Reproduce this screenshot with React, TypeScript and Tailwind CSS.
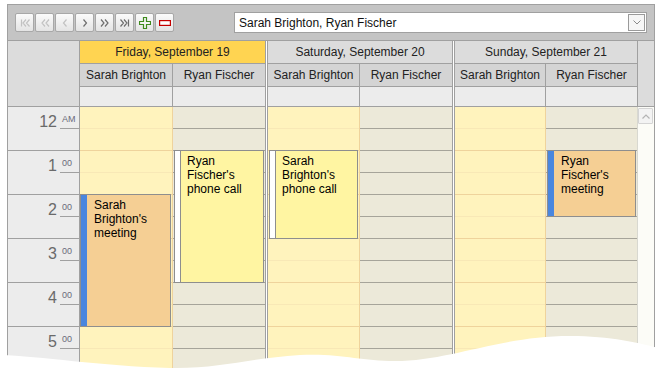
import React from "react";

const BORDER = "border-[#a0a0a0]";

function NavIcon({ kind, disabled }: { kind: string; disabled?: boolean }) {
  const c = disabled ? "#c2c2c2" : "#6e6e6e";
  const p: Record<string, string> = {
    first: "M1.5 1.5 V8.5 M6 1.5 L3 5 L6 8.5 M9.5 1.5 L6.5 5 L9.5 8.5",
    prev2: "M5 1.5 L2 5 L5 8.5 M9 1.5 L6 5 L9 8.5",
    prev: "M6.5 1.5 L3.5 5 L6.5 8.5",
    next: "M3.5 1.5 L6.5 5 L3.5 8.5",
    next2: "M1 1.5 L4 5 L1 8.5 M5 1.5 L8 5 L5 8.5",
    last: "M0.5 1.5 L3.5 5 L0.5 8.5 M4 1.5 L7 5 L4 8.5 M8.5 1.5 V8.5",
  };
  return (
    <svg width="10" height="10" viewBox="0 0 10 10">
      <path d={p[kind]} fill="none" stroke={c} strokeWidth="1.2" />
    </svg>
  );
}

function Btn({ children }: { children: React.ReactNode }) {
  return (
    <div className="w-[19px] h-[19px] rounded-[2px] border border-[#a8a8a8] bg-gradient-to-b from-[#fbfbfb] to-[#e4e4e4] flex items-center justify-center">
      {children}
    </div>
  );
}

function HourLabel({ n, s }: { n: string; s: string }) {
  return (
    <div className="h-[44px] border-b border-[#a0a0a0] flex flex-col">
      <div className="h-[21px] flex justify-end">
        <span className="text-[16px] leading-[17px] pt-[6px] pr-[3px] text-[#6a6a6a]">{n}</span>
        <span className="w-[19px] text-[9px] leading-[9px] pt-[8px] pl-[2px] text-[#6a6a7a]">{s}</span>
      </div>
      <div className="flex justify-end">
        <div className="w-[19px] h-px bg-[#a0a0a0]" />
      </div>
    </div>
  );
}

const HOURS = [
  { n: "12", s: "AM" },
  { n: "1", s: "00" },
  { n: "2", s: "00" },
  { n: "3", s: "00" },
  { n: "4", s: "00" },
  { n: "5", s: "00" },
];

const HALF = Array.from({ length: 14 }, (_, i) => i);

function YellowCells() {
  return (
    <>
      {HALF.map((i) =>
        i % 2 === 0 ? (
          <div key={i} className="h-[22px] border-b border-[#f8e8b6]" />
        ) : (
          <div key={i} className="h-[22px] border-b border-[#efd39c]" />
        )
      )}
    </>
  );
}

function BeigeCells() {
  return (
    <>
      {HALF.map((i) => (
        <div key={i} className="h-[22px] border-b border-[#a6a49a]" />
      ))}
    </>
  );
}

function Meeting({ lines, cls }: { lines: string[]; cls: string }) {
  return (
    <div className={"absolute border border-[#8e8e8e] bg-[#f5cf94] flex " + cls}>
      <div className="w-[6px] bg-[#4a86de]" />
      <div className="pl-[7px] pt-[3px] text-[12px] leading-[14px] text-black">
        {lines.map((l) => (
          <div key={l}>{l}</div>
        ))}
      </div>
    </div>
  );
}

function Call({ lines, cls }: { lines: string[]; cls: string }) {
  return (
    <div className={"absolute border border-[#8e8e8e] bg-[#fff5a2] flex " + cls}>
      <div className="w-[6px] bg-white border-r border-[#8e8e8e]" />
      <div className="pl-[6px] pt-[3px] text-[12px] leading-[14px] text-black">
        {lines.map((l) => (
          <div key={l}>{l}</div>
        ))}
      </div>
    </div>
  );
}

export default function App() {
  return (
    <div className="relative w-[662px] h-[374px] overflow-hidden bg-white font-['Liberation_Sans',Arial,sans-serif] text-[12px] text-[#222]">
      <div className={"ml-[7px] mt-[4px] w-[648px] border " + BORDER}>
        {/* toolbar */}
        <div className={"h-[36px] bg-[#c4c4c4] border-b flex items-center pl-[7px] " + BORDER}>
          <div className="flex gap-[1px]">
            <Btn><NavIcon kind="first" disabled /></Btn>
            <Btn><NavIcon kind="prev2" disabled /></Btn>
            <Btn><NavIcon kind="prev" disabled /></Btn>
            <Btn><NavIcon kind="next" /></Btn>
            <Btn><NavIcon kind="next2" /></Btn>
            <Btn><NavIcon kind="last" /></Btn>
            <Btn>
              <svg width="12" height="12" viewBox="0 0 12 12">
                <path d="M4.5 0.5 H7.5 V4.5 H11.5 V7.5 H7.5 V11.5 H4.5 V7.5 H0.5 V4.5 H4.5 Z" fill="#f4f4f4" stroke="#3f8a1e" strokeWidth="1.2" />
              </svg>
            </Btn>
            <Btn>
              <svg width="12" height="6" viewBox="0 0 12 6">
                <rect x="0.6" y="0.6" width="10.8" height="4.8" fill="#ffffff" stroke="#c40000" strokeWidth="1.2" />
              </svg>
            </Btn>
          </div>
          <div className={"ml-[60px] w-[413px] h-[21px] bg-white border flex items-center justify-between pl-[4px] pr-[1px] " + BORDER}>
            <span className="text-[12px] text-[#111]">Sarah Brighton, Ryan Fischer</span>
            <div className="w-[17px] h-[17px] border border-[#9a9a9a] bg-[#f6f6f6] flex items-center justify-center">
              <svg width="8" height="5" viewBox="0 0 8 5">
                <path d="M0.5 0.5 L4 4 L7.5 0.5" fill="none" stroke="#8a8a8a" strokeWidth="1" />
              </svg>
            </div>
          </div>
        </div>

        {/* header */}
        <div className="flex">
          <div className={"w-[72px] h-[66px] bg-[#dcdcdc] border-r border-b " + BORDER} />
          {/* Friday */}
          <div className="w-[185px] flex flex-col">
            <div className={"h-[23px] bg-[#ffd451] border-b flex items-center justify-center " + BORDER}>Friday, September 19</div>
            <div className={"h-[23px] bg-[#d4d4d4] border-b flex " + BORDER}>
              <div className={"w-[93px] border-r flex items-center justify-center " + BORDER}>Sarah Brighton</div>
              <div className="flex-1 flex items-center justify-center">Ryan Fischer</div>
            </div>
            <div className={"h-[20px] bg-[#ececec] border-b flex " + BORDER}>
              <div className={"w-[93px] border-r " + BORDER} />
            </div>
          </div>
          {/* Saturday */}
          <div className="w-[187px] flex flex-col border-l-[3px] border-double border-l-[#a0a0a0]">
            <div className={"h-[23px] bg-[#dcdcdc] border-b flex items-center justify-center " + BORDER}>Saturday, September 20</div>
            <div className={"h-[23px] bg-[#d4d4d4] border-b flex " + BORDER}>
              <div className={"w-[92px] border-r flex items-center justify-center " + BORDER}>Sarah Brighton</div>
              <div className="flex-1 flex items-center justify-center">Ryan Fischer</div>
            </div>
            <div className={"h-[20px] bg-[#ececec] border-b flex " + BORDER}>
              <div className={"w-[92px] border-r " + BORDER} />
            </div>
          </div>
          {/* Sunday */}
          <div className="w-[185px] flex flex-col border-l-[3px] border-double border-l-[#a0a0a0]">
            <div className={"h-[23px] bg-[#dcdcdc] border-b flex items-center justify-center " + BORDER}>Sunday, September 21</div>
            <div className={"h-[23px] bg-[#d4d4d4] border-b flex " + BORDER}>
              <div className={"w-[91px] border-r flex items-center justify-center " + BORDER}>Sarah Brighton</div>
              <div className="flex-1 flex items-center justify-center">Ryan Fischer</div>
            </div>
            <div className={"h-[20px] bg-[#ececec] border-b flex " + BORDER}>
              <div className={"w-[91px] border-r " + BORDER} />
            </div>
          </div>
          <div className={"w-[17px] h-[66px] bg-[#dcdcdc] border-l border-b " + BORDER} />
        </div>

        {/* body */}
        <div className="flex">
          <div className={"w-[72px] bg-[#ececec] border-r " + BORDER}>
            {HOURS.map((h) => (
              <HourLabel key={h.n} n={h.n} s={h.s} />
            ))}
            <div className="h-[44px]" />
          </div>
          {/* Friday */}
          <div className="w-[185px] flex">
            <div className="relative w-[93px] bg-[#fff3bd] border-r border-[#efd39c]">
              <YellowCells />
              <Meeting lines={["Sarah", "Brighton's", "meeting"]} cls="left-0 top-[87px] w-[91px] h-[133px]" />
            </div>
            <div className="relative flex-1 bg-[#ece9d9]">
              <BeigeCells />
              <Call lines={["Ryan", "Fischer's", "phone call"]} cls="left-[1px] top-[43px] w-[90px] h-[133px]" />
            </div>
          </div>
          {/* Saturday */}
          <div className="w-[187px] flex border-l-[3px] border-double border-l-[#a0a0a0]">
            <div className="relative w-[92px] bg-[#fff3bd] border-r border-[#efd39c]">
              <YellowCells />
              <Call lines={["Sarah", "Brighton's", "phone call"]} cls="left-[1px] top-[43px] w-[89px] h-[89px]" />
            </div>
            <div className="relative flex-1 bg-[#ece9d9]">
              <BeigeCells />
            </div>
          </div>
          {/* Sunday */}
          <div className="w-[185px] flex border-l-[3px] border-double border-l-[#a0a0a0]">
            <div className="relative w-[91px] bg-[#fff3bd] border-r border-[#efd39c]">
              <YellowCells />
            </div>
            <div className="relative flex-1 bg-[#ece9d9]">
              <BeigeCells />
              <Meeting lines={["Ryan", "Fischer's", "meeting"]} cls="left-[1px] top-[43px] w-[89px] h-[67px]" />
            </div>
          </div>
          {/* scrollbar */}
          <div className="w-[17px] bg-[#fcfcf7] border-l border-[#d8d8d0] pt-[1px]">
            <div className="w-[15px] h-[16px] border border-[#d4d4d4] bg-[#f3f3f3] rounded-[1px] flex items-center justify-center">
              <svg width="8" height="5" viewBox="0 0 8 5">
                <path d="M0.5 4.5 L4 1 L7.5 4.5" fill="none" stroke="#b4b4b4" strokeWidth="1.2" />
              </svg>
            </div>
          </div>
        </div>
      </div>

      {/* torn bottom edge */}
      <svg className="absolute left-0 top-0 pointer-events-none" width="662" height="374" viewBox="0 0 662 374">
        <path
          d="M0,355 C40,356 100,366 170,368 C220,369 250,358 300,355 C340,353 360,361 395,361 C450,361 500,336 570,336 C610,336 640,343 662,349 L662,374 L0,374 Z"
          fill="#ffffff"
        />
      </svg>
    </div>
  );
}
